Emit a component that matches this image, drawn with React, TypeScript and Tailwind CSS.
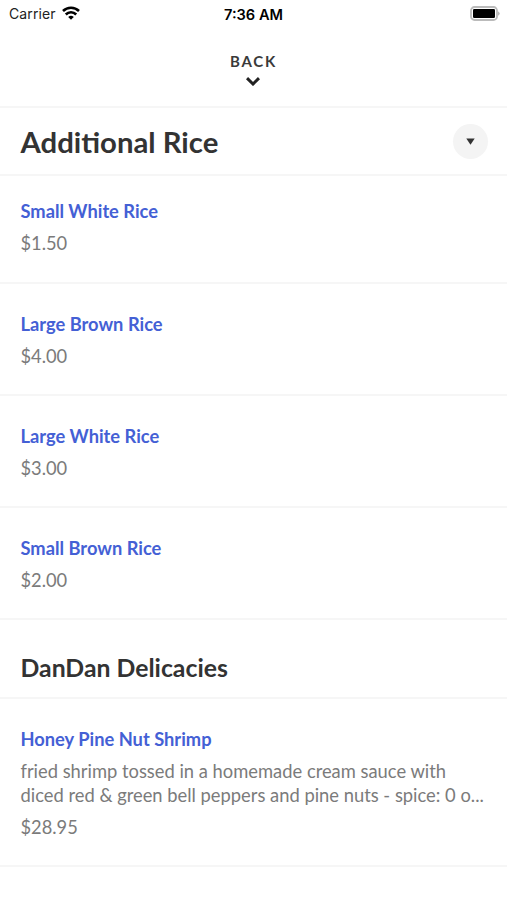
interface MenuItem {
  name: string;
  price: string;
  description?: string[];
}

const riceItems: MenuItem[] = [
  { name: 'Small White Rice', price: '$1.50' },
  { name: 'Large Brown Rice', price: '$4.00' },
  { name: 'Large White Rice', price: '$3.00' },
  { name: 'Small Brown Rice', price: '$2.00' },
];

const delicacies: MenuItem[] = [
  {
    name: 'Honey Pine Nut Shrimp',
    price: '$28.95',
    description: [
      'fried shrimp tossed in a homemade cream sauce with',
      'diced red & green bell peppers and pine nuts - spice: 0 o...',
    ],
  },
];

function StatusBar() {
  return (
    <div className="flex h-[27px] items-center justify-between pl-[9px] pr-[7px] font-['Inter',sans-serif] text-[14px] text-[#222]">
      <div className="flex w-40 items-center gap-1.5">
        <span className="tracking-[0.1px]">Carrier</span>
        <svg className="mb-0.5" width="18" height="14" viewBox="0 0 18 14" fill="none" stroke="#000" strokeWidth="2.6">
          <path d="M1 5 A11.5 11.5 0 0 1 17 5" />
          <path d="M3.8 8.5 A7.3 7.3 0 0 1 14.2 8.5" />
          <path d="M6.2 10.9 A4.2 4.2 0 0 1 11.8 10.9 L9 13.8 Z" fill="#000" stroke="none" />
        </svg>
      </div>
      <span className="mr-0.5 pt-[3px] text-[14.6px] font-semibold leading-5 text-black">7:36 AM</span>
      <div className="flex w-40 justify-end">
        <svg width="30" height="15" viewBox="0 0 30 15">
          <rect x="1" y="1" width="26" height="13" rx="3.5" fill="none" stroke="#bbb" strokeWidth="1.8" />
          <rect x="3" y="3" width="22" height="9" rx="1.2" fill="#000" />
          <path d="M28.2 5.2 Q31 7.5 28.2 9.8 Z" fill="#aaa" />
        </svg>
      </div>
    </div>
  );
}

function MenuRow({ name, price, description }: MenuItem) {
  return (
    <div className="border-b-2 border-[#f6f6f6] px-[20.5px] pb-[25.3px] pt-[28px]">
      <h3 className="text-[18.3px] font-bold leading-[25px] text-[#4460d5]">{name}</h3>
      {description && (
        <p className="mt-[7px] whitespace-nowrap text-[18.35px] leading-[24.6px] text-[#7b7b7b]">
          {description.map(line => (
            <span key={line} className="block">
              {line}
            </span>
          ))}
        </p>
      )}
      <p className="mt-[7px] text-[18.3px] leading-[25px] text-[#7b7b7b]">{price}</p>
    </div>
  );
}

function App() {
  return (
    <div className="h-[900px] overflow-hidden bg-white font-['Lato',sans-serif]">
      <StatusBar />

      {/* BACK BUTTON */}
      <button className="flex h-[81px] w-full flex-col items-center border-b-2 border-[#f6f6f6] pt-[23.5px] text-[#3a3a3a]">
        <span className="text-[15px] font-bold leading-5 tracking-[1.7px]">BACK</span>
        <svg className="mr-px mt-[6.5px]" width="14" height="9" viewBox="0 0 14 9" fill="none" stroke="#222" strokeWidth="3">
          <path d="M1 1.2 L7 7 L13 1.2" />
        </svg>
      </button>

      {/* CURRENT CATEGORY */}
      <div className="flex h-[68px] items-center justify-between border-b-2 border-[#f6f6f6] pl-[20.5px] pr-[19px]">
        <h1 className="pt-0.5 text-[29.3px] font-bold text-[#333]">Additional Rice</h1>
        <button className="flex size-[35px] items-center justify-center rounded-full bg-[#f4f4f4]">
          <svg width="9" height="7" viewBox="0 0 9 7" fill="#333">
            <path d="M0.3 0.5 H8.7 L4.5 6.8 Z" />
          </svg>
        </button>
      </div>

      <div className="-mt-[4.8px]">
        {riceItems.map(item => (
          <MenuRow key={item.name} {...item} />
        ))}
      </div>

      <h2 className="flex h-[78.5px] items-center border-b-2 border-[#f6f6f6] px-[20.5px] pt-[17.5px] text-[24.8px] font-bold text-[#333]">
        DanDan Delicacies
      </h2>
      {delicacies.map(item => (
        <MenuRow key={item.name} {...item} />
      ))}
    </div>
  );
}

export default App;
